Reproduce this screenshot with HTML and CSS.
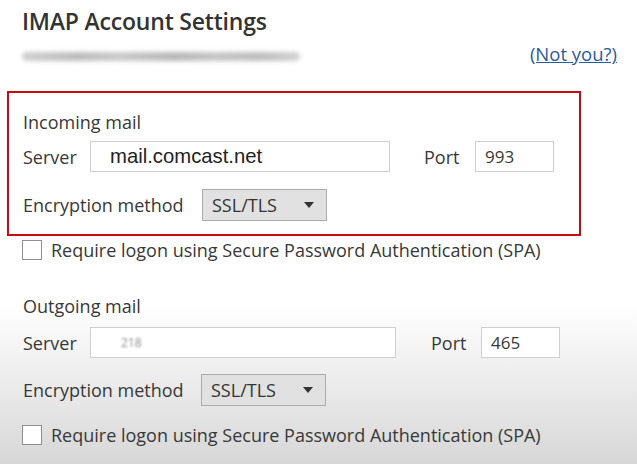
FILE: index.html
```html
<!DOCTYPE html>
<html>
<head>
<meta charset="utf-8">
<link rel="stylesheet" href="styles.css">
</head>
<body>
<div class="page">
  <h1 class="title">IMAP Account Settings</h1>
  <div class="account-row">
    <div class="blurred-email"></div>
    <a class="notyou" href="#">(Not you?)</a>
  </div>

  <div class="incoming">
    <div class="section-label">Incoming mail</div>
    <div class="row server-row">
      <span class="lbl lbl-server">Server</span>
      <div class="input server-in"><span class="server-text">mail.comcast.net</span></div>
      <span class="lbl lbl-port">Port</span>
      <div class="input port-in">993</div>
    </div>
    <div class="row enc-row">
      <span class="lbl lbl-enc">Encryption method</span>
      <div class="select">
        <span>SSL/TLS</span>
        <svg class="arrow" width="10" height="6" viewBox="0 0 10 6"><path d="M0 0 H10 L5 6 Z" fill="#333"/></svg>
      </div>
    </div>
  </div>

  <label class="check-row check1">
    <span class="box"></span>
    <span>Require logon using Secure Password Authentication (SPA)</span>
  </label>

  <div class="outgoing">
    <div class="section-label">Outgoing mail</div>
    <div class="row server-row2">
      <span class="lbl lbl-server">Server</span>
      <div class="input server-in2"><span class="faint">218</span></div>
      <span class="lbl lbl-port">Port</span>
      <div class="input port-in">465</div>
    </div>
    <div class="row enc-row2">
      <span class="lbl lbl-enc2">Encryption method</span>
      <div class="select">
        <span>SSL/TLS</span>
        <svg class="arrow" width="10" height="6" viewBox="0 0 10 6"><path d="M0 0 H10 L5 6 Z" fill="#333"/></svg>
      </div>
    </div>
  </div>

  <label class="check-row check2">
    <span class="box"></span>
    <span>Require logon using Secure Password Authentication (SPA)</span>
  </label>
</div>
</body>
</html>
```

FILE: styles.css
```css
* { box-sizing: border-box; }
html, body {
  margin: 0;
  padding: 0;
  width: 637px;
  height: 464px;
  overflow: hidden;
}
body {
  background: linear-gradient(to bottom, #ffffff 0px, #ffffff 305px, #d7d7d7 464px);
  font-family: "Open Sans", "Noto Sans", sans-serif;
  color: #383838;
  font-size: 18px;
}
.page {
  padding-top: 6px;
}
.title {
  margin: 0 0 0 22px;
  font-size: 23px;
  font-weight: 600;
  line-height: 30px;
  color: #333;
  letter-spacing: -0.2px;
}
.account-row {
  display: flex;
  align-items: center;
  justify-content: space-between;
  height: 28px;
  margin-top: 4px;
  padding-left: 22px;
  padding-right: 20px;
}
.blurred-email {
  width: 278px;
  height: 9px;
  border-radius: 5px;
  background: linear-gradient(to right, #d0d0d0 0%, #bdbdbd 20%, #cacaca 35%, #b8b8b8 55%, #c6c6c6 70%, #bebebe 85%, #d2d2d2 100%);
  filter: blur(2.2px);
  margin-top: 4px;
}
.notyou {
  color: #2b5b9a;
  text-decoration: underline;
  font-size: 18.5px;
  line-height: 20px;
}
.incoming {
  margin: 23px 0 0 7px;
  width: 574px;
  border: 2.5px solid #cc0a14;
  padding: 19px 0 13px 14px;
}
.section-label {
  line-height: 20px;
}
.row {
  display: flex;
  align-items: center;
}
.server-row { margin-top: 9px; height: 31px; }
.enc-row { margin-top: 17px; height: 32px; }
.lbl { line-height: 20px; }
.lbl-server { width: 67px; }
.lbl-port { margin-left: 34px; width: 51px; }
.lbl-enc { width: 179px; }
.lbl-enc2 { width: 178px; }
.input {
  height: 31px;
  border: 1.5px solid #cfcfcf;
  background: #fff;
  display: flex;
  align-items: center;
  font-size: 17px;
}
.server-in { width: 300px; padding-left: 19px; }
.server-text {
  font-family: "Liberation Sans", Arial, sans-serif;
  font-size: 20.3px;
  color: #222;
}
.port-in { width: 79px; padding-left: 9px; }
.select {
  width: 125px;
  height: 32px;
  background: #e1e1e1;
  border: 1.5px solid #ababab;
  display: flex;
  align-items: center;
  justify-content: space-between;
  padding: 0 12px 0 9px;
  color: #333;
}
.arrow { display: block; }
.check-row {
  display: flex;
  align-items: center;
  margin-left: 22px;
  height: 20px;
}
.check1 { margin-top: 4px; }
.box {
  width: 20px;
  height: 20px;
  border: 1.5px solid #8f8f8f;
  background: #fff;
  margin-right: 9px;
}
.outgoing {
  padding-left: 23px;
  margin-top: 36px;
}
.server-row2 { margin-top: 11px; height: 31px; }
.server-in2 { width: 306px; padding-left: 30px; }
.server-row2 .lbl-port { margin-left: 35px; width: 50px; }
.faint {
  font-size: 12px;
  color: #8a8a8a;
  filter: blur(0.8px);
}
.enc-row2 { margin-top: 15px; height: 33px; }
.check2 { margin-top: 19px; }
```
